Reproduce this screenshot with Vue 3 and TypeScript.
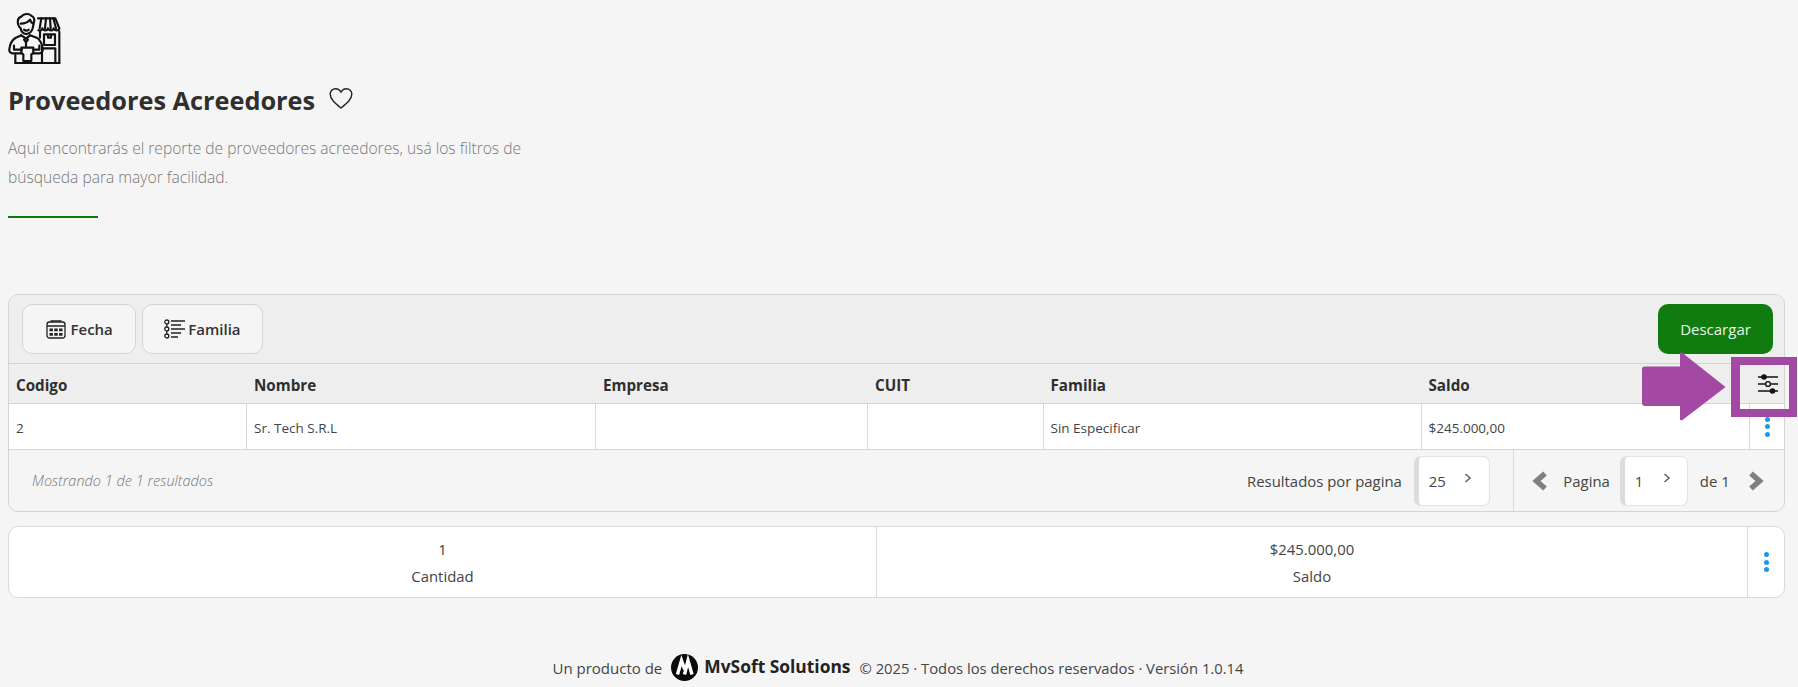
<script setup lang="ts">
const columns = ['Codigo', 'Nombre', 'Empresa', 'CUIT', 'Familia', 'Saldo']
const row = ['2', 'Sr. Tech S.R.L', '', '', 'Sin Especificar', '$245.000,00']
const totals = [
  { value: '1', label: 'Cantidad' },
  { value: '$245.000,00', label: 'Saldo' },
]
</script>

<template>
  <div class="page">
    <header class="intro">
      <svg class="hero-icon" viewBox="24 33 162 159" fill="none" stroke="#111" stroke-width="6.500" stroke-linejoin="round" stroke-linecap="round">
        <path d="M58 78c-8-12-6-28 6-31 6-9 22-11 30-3 9 3 11 14 7 24l-3 14c-3 11-12 17-20 17s-15-8-16-17z" />
        <path d="M62 68c12 0 22-4 28-12 2 6 6 10 9 12" />
        <path d="M72 86c5 4 10 4 14 0" />
        <path d="M64 103l-18 8c-10 6-16 18-18 34-1 8 4 12 10 12h26" />
        <path d="M90 103l22 8c8 6 14 18 16 32 1 10-4 14-10 14h-18" />
        <path d="M64 103l14 10 12-10M72 116l6 8 6-8M78 124v14" />
        <path d="M42 146h24M42 146v-12M118 146h-18M118 146v-12" />
        <path d="M64 140h36v16l-6 4v20H70v-20l-6-4z" />
        <path d="M46 186h132" />
        <path d="M46 162v24M178 92v94" />
        <path d="M114 52h52l12 30c0 8-14 8-17 0 0 8-15 8-17 0 0 8-15 8-17 0 0 5-6 8-12 6" />
        <path d="M124 52l-5 30M138 52l-3 30M150 52l2 30M160 52l8 30" />
        <path d="M120 92v18M132 100h33v32h-33zM144 100v10h9v-10" />
        <path d="M126 186v-44h40v44M126 142v-8" />
      </svg>
      <h1 class="title">
        Proveedores Acreedores
        <svg class="heart" viewBox="0 0 24 22" fill="none" stroke="#222" stroke-width="1.4" stroke-linejoin="round">
          <path d="M12 20.500C6 15.500 1.200 11.600 1.200 6.800 1.200 3.600 3.600 1.200 6.600 1.200c2.200 0 4.200 1.200 5.400 3.600 1.200-2.400 3.200-3.600 5.400-3.600 3 0 5.400 2.400 5.400 5.600 0 4.800-4.800 8.700-10.800 13.700z" />
        </svg>
      </h1>
      <p class="lead">Aquí encontrarás el reporte de proveedores acreedores, usá los filtros de búsqueda para mayor facilidad.</p>
      <div class="rule"></div>
    </header>

    <section class="panel">
      <div class="toolbar">
        <div class="filters">
          <button class="filter">
            <svg class="btn-icon" viewBox="0 0 20 20" fill="none" stroke="#222" stroke-width="1.3">
              <rect x="1" y="3" width="18" height="16" rx="2.500" />
              <path d="M1 7h18M6 3V1.200M14 3V1.200M6 1.200v2M4.500 1.800h11" />
              <path d="M3.500 9.500h3.400v2.800H3.500zM8.300 9.500h3.400v2.800H8.300zM13.100 9.500h3.400v2.800h-3.400zM3.500 14h3.400v2.800H3.500zM8.300 14h3.400v2.800H8.300zM13.100 14h3.400v2.800h-3.400z" fill="#222" stroke="none" />
            </svg>
            Fecha
          </button>
          <button class="filter family">
            <svg class="btn-icon wide" viewBox="0 0 21 20" fill="none" stroke="#222" stroke-width="1.3">
              <circle cx="2.800" cy="3" r="2" />
              <circle cx="2.800" cy="10" r="2" />
              <circle cx="2.800" cy="17" r="2" />
              <path d="M2.800 5v3M2.800 12v3" />
              <path d="M7 2h14M7 6h10M7 10h14M7 14h10M7 18h7" />
            </svg>
            Familia
          </button>
        </div>
        <button class="download">Descargar</button>
      </div>

      <div class="table-head grid">
        <div v-for="c in columns" :key="c" class="th">{{ c }}</div>
        <div class="th tool">
          <svg class="sliders" viewBox="0 0 20 20" fill="none" stroke="#111" stroke-width="1.600">
            <path d="M0 3h20M0 10h20M0 17h20" />
            <circle cx="6" cy="3" r="2.800" fill="#111" stroke="none" />
            <circle cx="10" cy="10" r="2.400" fill="#eee" stroke-width="1.400" />
            <circle cx="14.500" cy="17" r="2.800" fill="#111" stroke="none" />
          </svg>
        </div>
      </div>

      <div class="table-row grid">
        <div v-for="(cell, i) in row" :key="i" class="td">{{ cell }}</div>
        <div class="td dots-cell"><span class="dots"><i></i><i></i><i></i></span></div>
      </div>

      <div class="table-foot">
        <span class="showing">Mostrando 1 de 1 resultados</span>
        <div class="per-page">
          <span>Resultados por pagina</span>
          <div class="select size-25"><span>25</span><svg class="mini" viewBox="0 0 8 10"><path d="M1.500 1l4.500 4-4.500 4" /></svg></div>
        </div>
        <div class="pager">
          <svg class="nav" viewBox="0 0 17 20"><path d="M13 2.500L4.500 10l8.500 7.500" /></svg>
          <span class="pager-label">Pagina</span>
          <div class="select size-1"><span>1</span><svg class="mini" viewBox="0 0 8 10"><path d="M1.500 1l4.500 4-4.500 4" /></svg></div>
          <span class="pager-of">de 1</span>
          <svg class="nav" viewBox="0 0 17 20"><path d="M4 2.500L12.500 10 4 17.500" /></svg>
        </div>
      </div>
    </section>

    <section class="summary">
      <div v-for="t in totals" :key="t.label" class="stat">
        <div>{{ t.value }}</div>
        <div>{{ t.label }}</div>
      </div>
      <div class="summary-menu"><span class="dots"><i></i><i></i><i></i></span></div>
    </section>

    <footer class="credit">
      <span>Un producto de</span>
      <svg class="logo" viewBox="0 0 27 27">
        <circle cx="13.500" cy="13.500" r="13.500" fill="#0a0a0a" />
        <path d="M6.500 20.500L10.500 6.500l3.200 9" fill="none" stroke="#fff" stroke-width="3.400" />
        <path d="M13.500 20.500L17 6.500l4 14" fill="none" stroke="#fff" stroke-width="3.400" />
      </svg>
      <strong class="brand">MvSoft Solutions</strong>
      <span class="rights">© 2025 · Todos los derechos reservados · Versión 1.0.14</span>
    </footer>

    <svg class="callout-arrow" viewBox="0 0 86 70">
      <path d="M5 15.500h35V3q0-3 2.500-1l43 34-43 33q-2.500 1-2.500-1V55H5q-3 0-3-3V18q0-2.500 3-2.500z" fill="#a349a4" />
    </svg>
    <div class="callout-box"></div>
  </div>
</template>

<style>
html, body {
  margin: 0;
  background: #f5f5f5;
}
</style>

<style scoped>
.page {
  position: relative;
  height: 687px;
  overflow: hidden;
  background: #f5f5f5;
  color: #333;
  font-family: "Open Sans", "Liberation Sans", sans-serif;
  box-sizing: border-box;
  padding: 12px 12px 0 8px;
}
.hero-icon {
  display: block;
  width: 54px;
  height: 53px;
}
.title {
  display: flex;
  align-items: center;
  gap: 14px;
  margin: 13px 0 0;
  height: 44px;
  font-size: 25.300px;
  font-weight: 700;
  color: #2f2f2f;
}
.heart {
  width: 24px;
  height: 23px;
  margin-top: -4px;
}
.lead {
  margin: 12px 0 0;
  width: 530px;
  font-size: 15.600px;
  line-height: 29px;
  font-weight: 300;
  color: #777;
}
.rule {
  width: 90px;
  height: 2px;
  margin-top: 24px;
  background: #0b7a0b;
}
.panel {
  margin-top: 76px;
  border: 1px solid #d4d4d4;
  border-radius: 10px;
  overflow: hidden;
  width: 1777px;
  box-sizing: border-box;
}
.toolbar {
  display: flex;
  justify-content: space-between;
  align-items: center;
  box-sizing: border-box;
  height: 69px;
  padding: 0 11px 0 13px;
  background: #eeeeee;
  border-bottom: 1px solid #d4d4d4;
}
.filters {
  display: flex;
  gap: 6px;
}
.filter {
  display: flex;
  align-items: center;
  justify-content: center;
  gap: 5px;
  height: 50px;
  padding: 0 22.500px;
  background: #f5f5f5;
  border: 1px solid #d4d4d4;
  border-radius: 10px;
  font: 600 15px "Open Sans", sans-serif;
  color: #333;
}
.family {
  gap: 3px;
  padding: 0 21px;
}
.btn-icon {
  width: 20px;
  height: 20px;
}
.btn-icon.wide {
  width: 21px;
}
.download {
  width: 115px;
  height: 50px;
  border: 0;
  border-radius: 10px;
  background: #107c10;
  color: #e9f6e9;
  font: 400 15px "Open Sans", sans-serif;
}
.grid {
  display: grid;
  grid-template-columns: 238px 349px 272px 175.500px 378px 328.500px 1fr;
}
.table-head {
  height: 40px;
  background: #eeeeee;
  border-bottom: 1px solid #d4d4d4;
  box-sizing: border-box;
}
.th {
  display: flex;
  align-items: center;
  padding: 2px 0 0 7px;
  font-size: 15.200px;
  font-weight: 700;
  color: #2f2f2f;
}
.tool {
  padding: 0 0 0 1px;
  justify-content: center;
}
.sliders {
  width: 20px;
  height: 20px;
}
.table-row {
  height: 46px;
  background: #fff;
  border-bottom: 1px solid #d4d4d4;
  box-sizing: border-box;
}
.td {
  display: flex;
  align-items: center;
  padding: 2px 0 0 7px;
  border-right: 1px solid #d9d9d9;
  font-size: 13.500px;
  color: #444;
}
.td:last-child {
  border-right: 0;
}
.dots-cell {
  padding: 0 0 0 1px;
  justify-content: center;
}
.dots {
  display: flex;
  flex-direction: column;
  gap: 2.500px;
}
.dots i {
  display: block;
  width: 5px;
  height: 5px;
  border-radius: 50%;
  background: #1e96ee;
}
.table-foot {
  display: flex;
  align-items: center;
  height: 61px;
  padding-left: 23px;
  font-size: 14.900px;
  color: #444;
}
.showing {
  flex: 1;
  font-style: italic;
  font-weight: 300;
  font-size: 14.500px;
  color: #777;
}
.per-page {
  display: flex;
  align-items: center;
  gap: 12px;
  width: 267.300px;
  height: 100%;
  border-right: 1px solid #d9d9d9;
  box-sizing: border-box;
}
.select {
  position: relative;
  display: flex;
  align-items: center;
  box-sizing: border-box;
  height: 50px;
  background: #fff;
  border: 1px solid #e2e2e2;
  border-left: 5px solid #dcdcdc;
  border-radius: 7px;
  padding-left: 10px;
}
.size-25 {
  width: 76px;
}
.size-1 {
  width: 68px;
}
.mini {
  position: absolute;
  top: 16px;
  width: 8px;
  height: 10px;
  fill: none;
  stroke: #666;
  stroke-width: 1.600;
}
.size-25 .mini {
  left: 45px;
}
.size-1 .mini {
  left: 38px;
}
.pager {
  display: flex;
  align-items: center;
  width: 269.700px;
  padding-left: 18px;
  box-sizing: border-box;
}
.nav {
  width: 17px;
  height: 20px;
  fill: none;
  stroke: #808080;
  stroke-width: 5.500;
}
.pager-label {
  margin: 0 10px 0 14px;
}
.pager-of {
  margin: 0 17px 0 12px;
}
.summary {
  display: grid;
  grid-template-columns: 868px 1fr 36px;
  margin-top: 14px;
  width: 1777px;
  height: 72px;
  box-sizing: border-box;
  background: #fff;
  border: 1px solid #d9d9d9;
  border-radius: 10px;
  overflow: hidden;
  font-size: 14.900px;
  color: #444;
}
.stat {
  display: flex;
  flex-direction: column;
  align-items: center;
  justify-content: center;
  gap: 6px;
  padding-top: 2px;
  line-height: 21px;
  border-right: 1px solid #d9d9d9;
}
.summary-menu {
  display: flex;
  align-items: center;
  justify-content: center;
}
.credit {
  display: flex;
  align-items: center;
  justify-content: center;
  margin-top: 56px;
  height: 27px;
  width: 1780px;
  font-size: 15px;
  color: #444;
}
.logo {
  width: 27px;
  height: 27px;
  margin: 0 6px 0 9px;
}
.brand {
  margin: -3px 9px 0 0;
  font-size: 17.400px;
  font-weight: 700;
  color: #222;
}
.rights {
  font-size: 14.800px;
}
.callout-arrow {
  position: absolute;
  left: 1640px;
  top: 351px;
  width: 86px;
  height: 70px;
}
.callout-box {
  position: absolute;
  left: 1731px;
  top: 357px;
  width: 66px;
  height: 60px;
  box-sizing: border-box;
  border: 8px solid #a349a4;
  border-left-width: 9px;
}
</style>
